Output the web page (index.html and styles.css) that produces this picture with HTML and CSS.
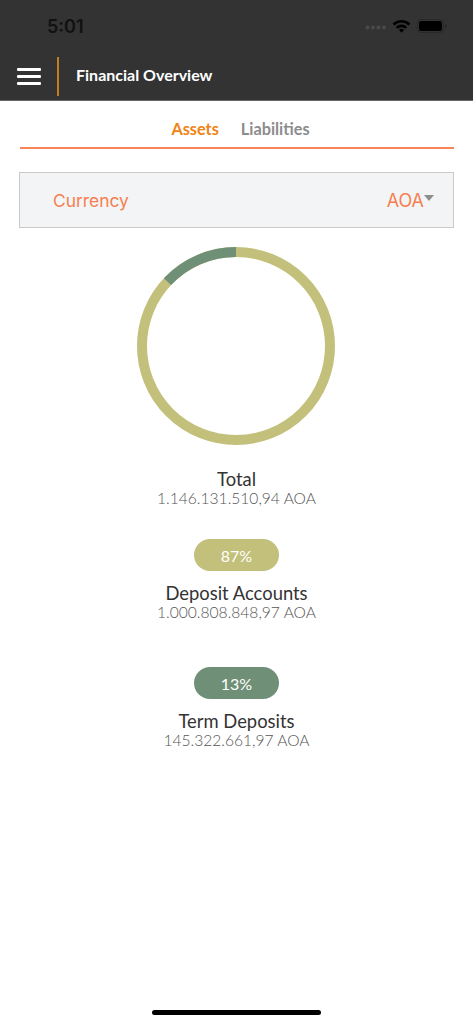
FILE: index.html
```html
<!DOCTYPE html>
<html lang="en">
<head>
  <meta charset="UTF-8" />
  <meta name="viewport" content="width=device-width, initial-scale=1.0"/>
  <title>Financial Overview</title>
  <link rel="stylesheet" href="styles.css">
</head>
<body>

  <header class="site-header">
    <div class="status-bar">
      <span class="clock">5:01</span>
      <div class="status-icons">
        <svg class="signal" width="21" height="5" viewBox="0 0 21 5">
          <circle cx="2.5" cy="2.5" r="2" />
          <circle cx="8" cy="2.5" r="2" />
          <circle cx="13.5" cy="2.5" r="2" />
          <circle cx="19" cy="2.5" r="2" />
        </svg>
        <svg class="wifi" width="19" height="14" viewBox="0 0 19 14">
          <path d="M0.6 4.6 A12.6 12.6 0 0 1 18.4 4.6 L16.6 6.5 A10 10 0 0 0 2.4 6.5 Z" />
          <path d="M3.8 7.9 A8 8 0 0 1 15.2 7.9 L13.4 9.8 A5.4 5.4 0 0 0 5.6 9.8 Z" />
          <path d="M7 11.1 A3.5 3.5 0 0 1 12 11.1 L9.5 13.7 Z" />
        </svg>
        <svg class="battery" width="30" height="14" viewBox="0 0 30 14">
          <rect x="0.5" y="0.5" width="26" height="13" rx="3.5" fill="none" stroke="#1a1a1a" stroke-opacity="0.45" />
          <rect x="2" y="2" width="23" height="10" rx="2.2" fill="#000" />
          <path d="M28 5 C29 5.3 29.6 6 29.6 7 C29.6 8 29 8.7 28 9 Z" fill="#1a1a1a" fill-opacity="0.5" />
        </svg>
      </div>
    </div>
    <div class="nav-bar">
      <button class="menu-btn" aria-label="Menu">
        <span></span><span></span><span></span>
      </button>
      <div class="nav-divider"></div>
      <h1 class="nav-title">Financial Overview</h1>
    </div>
  </header>

  <main class="content">
    <div class="tabs">
      <span class="tab active">Assets</span>
      <span class="tab">Liabilities</span>
    </div>

    <div class="currency-select">
      <span class="currency-label">Currency</span>
      <span class="currency-value">AOA<i class="caret"></i></span>
    </div>

    <svg class="donut" width="198" height="198" viewBox="0 0 198 198">
      <circle cx="99" cy="99" r="94" fill="none" stroke="#c2c07b" stroke-width="10" />
      <!-- 13% slice, going back from 12 o'clock -->
      <circle cx="99" cy="99" r="94" fill="none" stroke="#6f9077" stroke-width="10"
              pathLength="100" stroke-dasharray="13 87" transform="rotate(-136.8 99 99)" />
    </svg>

    <div class="total">
      <div class="item-name">Total</div>
      <div class="item-amount">1.146.131.510,94 AOA</div>
    </div>

    <div class="item">
      <span class="pill pill-deposit">87%</span>
      <div class="item-name">Deposit Accounts</div>
      <div class="item-amount">1.000.808.848,97 AOA</div>
    </div>

    <div class="item">
      <span class="pill pill-term">13%</span>
      <div class="item-name">Term Deposits</div>
      <div class="item-amount">145.322.661,97 AOA</div>
    </div>
  </main>

  <div class="home-indicator"></div>

</body>
</html>
```

FILE: styles.css
```css
html, body {
  height: 100%;
}

body {
  margin: 0;
  padding: 0;
  height: 1024px;
  position: relative;
  overflow: hidden;
  background: #fff;
  font-family: Lato, "Open Sans", sans-serif;
  color: #333;
}

.site-header {
  height: 100px;
  background-color: #333333;
  border-bottom: 1px solid #666;
}

.status-bar {
  height: 52px;
  padding: 0 26px 0 47px;
  display: flex;
  align-items: center;
  justify-content: space-between;
}

.clock {
  font-family: Inter, "Liberation Sans", sans-serif;
  font-size: 18px;
  font-weight: 600;
  color: #111;
}

.status-icons {
  display: flex;
  align-items: center;
  gap: 6px;
}

.signal {
  fill: #4a4a4a;
  margin-top: 3px;
}

.wifi {
  fill: #000;
}

.nav-bar {
  height: 48px;
  display: flex;
  align-items: center;
}

.menu-btn {
  width: 24px;
  margin-left: 17px;
  padding: 0;
  border: 0;
  background: none;
  display: flex;
  flex-direction: column;
  gap: 4px;
}

.menu-btn span {
  height: 3px;
  background: #fff;
  border-radius: 1px;
}

.nav-divider {
  width: 2px;
  height: 39px;
  margin-left: 16px;
  background: #c0801f;
}

.nav-title {
  margin: 0 0 3px 17px;
  font-size: 16px;
  font-weight: 700;
  color: #fff;
}

.content {
  display: flex;
  flex-direction: column;
  align-items: center;
}

.tabs {
  width: 434px;
  height: 48px;
  box-sizing: border-box;
  padding: 8px 0 0 8px;
  display: flex;
  justify-content: center;
  align-items: center;
  gap: 22px;
  border-bottom: 2px solid #f98455;
}

.tab {
  font-size: 16.3px;
  font-weight: 700;
  color: #8c8c8c;
}

.tab.active {
  color: #f08313;
}

.currency-select {
  width: 435px;
  height: 56px;
  box-sizing: border-box;
  margin-top: 23px;
  padding: 0 19px 0 33px;
  display: flex;
  align-items: center;
  justify-content: space-between;
  background: #f3f4f6;
  border: 1px solid #c9cac5;
  font-family: Inter, "Liberation Sans", sans-serif;
  font-size: 18px;
  color: #f67f50;
}

.currency-label {
  font-size: 17.4px;
}

.currency-value {
  display: flex;
  align-items: center;
}

.caret {
  width: 0;
  height: 0;
  margin-bottom: 4px;
  border-left: 5px solid transparent;
  border-right: 5px solid transparent;
  border-top: 6px solid #8e8e8e;
}

.donut {
  margin: 19px 2px 0 0;
  display: block;
}

.total {
  margin-top: 24px;
  text-align: center;
}

.item {
  display: flex;
  flex-direction: column;
  align-items: center;
  margin-top: 32px;
  margin-bottom: 14px;
}

.item-name {
  font-size: 18.4px;
  line-height: 21px;
  color: #333;
}

.item-amount {
  margin-top: -1px;
  font-size: 15.6px;
  font-weight: 300;
  line-height: 18px;
  color: #555;
}

.pill {
  width: 85px;
  height: 32px;
  margin-bottom: 12px;
  border-radius: 16px;
  display: flex;
  align-items: center;
  justify-content: center;
  font-size: 16px;
  color: #fff;
}

.pill-deposit {
  background: #c2c07b;
}

.pill-term {
  background: #6f9077;
}

.home-indicator {
  position: absolute;
  left: 152px;
  bottom: 9px;
  width: 169px;
  height: 5px;
  border-radius: 3px;
  background: #000;
}
```
